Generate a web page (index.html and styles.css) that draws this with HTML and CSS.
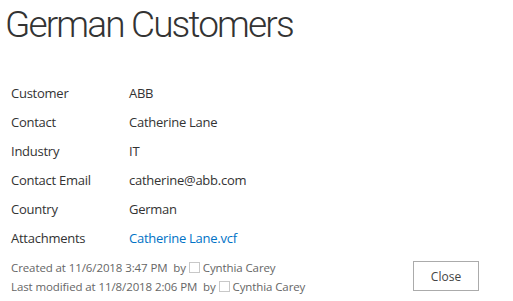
FILE: index.html
```html
<!DOCTYPE html>
<html>
<head>
<meta charset="utf-8">
<link rel="stylesheet" href="styles.css">
</head>
<body>
<div class="page">
  <h1 class="title">German Customers</h1>
  <div class="fields">
    <div class="label">Customer</div><div class="value">ABB</div>
    <div class="label">Contact</div><div class="value">Catherine Lane</div>
    <div class="label">Industry</div><div class="value">IT</div>
    <div class="label">Contact Email</div><div class="value">catherine@abb.com</div>
    <div class="label">Country</div><div class="value">German</div>
    <div class="label">Attachments</div><div class="value"><a class="link" href="#">Catherine Lane.vcf</a></div>
  </div>
  <div class="footer">
    <div class="meta">
      <div class="meta-line">Created at 11/6/2018 3:47 PM&nbsp; by<span class="presence"></span>&nbsp;Cynthia Carey</div>
      <div class="meta-line">Last modified at 11/8/2018 2:06 PM&nbsp; by<span class="presence"></span>&nbsp;Cynthia Carey</div>
    </div>
    <button class="close-btn">Close</button>
  </div>
</div>
</body>
</html>
```
FILE: styles.css
```css
html, body {
  margin: 0;
  padding: 0;
  background: #ffffff;
}
body {
  font-family: "Open Sans", "Noto Sans", sans-serif;
  color: #333333;
}
.page {
  width: 513px;
  height: 301px;
  box-sizing: border-box;
  display: flex;
  flex-direction: column;
}
.title {
  margin: 0;
  padding: 1px 0 0 5px;
  font-family: "Roboto", "Open Sans", sans-serif;
  font-weight: 300;
  font-size: 37px;
  letter-spacing: -1.85px;
  line-height: 47px;
  color: #333333;
}
.fields {
  margin-top: 30px;
  padding-left: 11px;
  display: grid;
  grid-template-columns: 118px 1fr;
  grid-auto-rows: 29px;
  font-size: 13px;
  line-height: 30px;
  letter-spacing: -0.25px;
  color: #333333;
}
.link {
  color: #0072c6;
  text-decoration: none;
}
.footer {
  margin-top: 6px;
  padding-left: 11px;
  padding-right: 34px;
  display: flex;
  justify-content: space-between;
  align-items: center;
}
.meta {
  font-size: 11.5px;
  letter-spacing: -0.1px;
  color: #666666;
  line-height: 19px;
}
.presence {
  display: inline-block;
  width: 9px;
  height: 9px;
  border: 1px solid #c8c8c8;
  margin-left: 3px;
  vertical-align: -1px;
}
.close-btn {
  width: 66px;
  height: 30px;
  margin-top: -2px;
  border: 1px solid #ababab;
  background: #ffffff;
  font-family: "Open Sans", "Noto Sans", sans-serif;
  font-size: 12px;
  color: #444444;
  padding: 0;
}
```
